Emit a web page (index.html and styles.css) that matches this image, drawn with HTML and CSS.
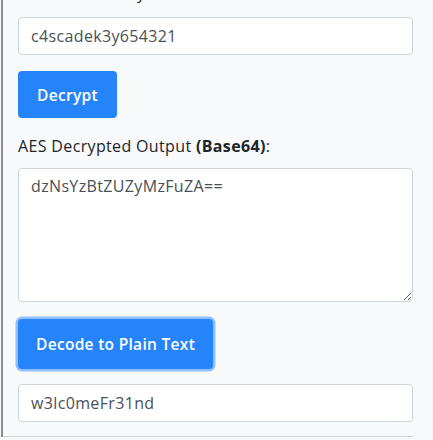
FILE: index.html
```html
<!DOCTYPE html>
<html>
<head>
<meta charset="utf-8">
<link rel="stylesheet" href="styles.css">
</head>
<body>
<div class="panel">
  <div class="content">
    <label class="label top-label">Enter Secret Key:</label>
    <input class="field" type="text" value="c4scadek3y654321">
    <button class="btn">Decrypt</button>
    <label class="label out-label">AES Decrypted Output <b>(Base64)</b>:</label>
    <textarea class="field area">dzNsYzBtZUZyMzFuZA==</textarea>
    <button class="btn btn-focus">Decode to Plain Text</button>
    <input class="field" type="text" value="w3lc0meFr31nd">
  </div>
  <div class="next-box"></div>
</div>
</body>
</html>
```

FILE: styles.css
```css
html, body {
  margin: 0;
  padding: 0;
  background: #f8f9fa;
  overflow: hidden;
}
body {
  font-family: "Open Sans", "Liberation Sans", sans-serif;
  color: #212529;
}
.panel {
  margin-left: 1px;
  border-left: 2px solid #8c8c8c;
  height: 437px;
  position: relative;
  overflow: hidden;
}
.content {
  padding-left: 15px;
  width: 395px;
  display: flex;
  flex-direction: column;
  align-items: flex-start;
  margin-top: -18px;
}
.label {
  display: block;
  font-size: 16px;
  line-height: 24px;
  letter-spacing: 0.35px;
  color: #212529;
}
.label b {
  font-weight: 700;
}
.top-label {
  line-height: 22px;
  margin-bottom: 13px;
}
.out-label {
  margin-bottom: 10px;
}
.field {
  box-sizing: border-box;
  width: 395px;
  height: 38px;
  margin: 0;
  padding: 0 12px;
  border: 1px solid #ced4da;
  border-radius: 4px;
  background: #fff;
  font-family: "Open Sans", "Liberation Sans", sans-serif;
  font-size: 16px;
  letter-spacing: 0.35px;
  color: #495057;
  outline: none;
}
.area {
  height: 134px;
  padding: 5px 12px;
  line-height: 24px;
  resize: vertical;
  margin-bottom: 15px;
  display: block;
}
.btn {
  margin: 16px 0 16px;
  height: 47px;
  padding: 0 19px;
  border: none;
  border-radius: 4px;
  background: #2684fb;
  color: #fff;
  font-family: "Open Sans", "Liberation Sans", sans-serif;
  font-size: 15.5px;
  font-weight: 600;
  letter-spacing: 0.3px;
}
.btn-focus {
  margin: 2px 0 15px 0;
  height: 50px;
  padding: 0 18px;
  box-shadow: 0 0 0 2.5px #8fbffc;
}
.next-box {
  position: absolute;
  left: 0;
  top: 436px;
  width: 410px;
  height: 20px;
  border-top: 1px solid #cfd3d7;
  background: #fff;
}
```
